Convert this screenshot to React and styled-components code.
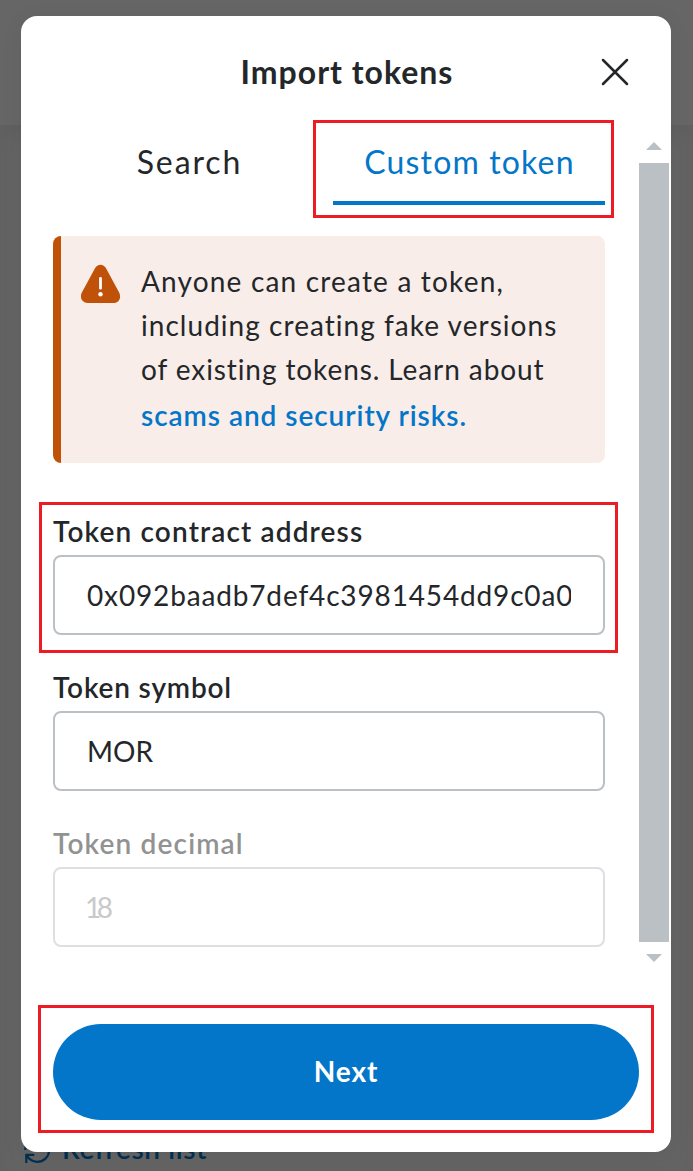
import React from "react";
import styled, { createGlobalStyle } from "styled-components";

const color = {
  text: "#24272a",
  primary: "#0376c9",
  warning: "#bf5208",
  warningMuted: "#f8ede8",
  border: "#bbc0c5",
  highlight: "#ed1c24",
};

const GlobalStyle = createGlobalStyle`
  * { box-sizing: border-box; }
  body {
    margin: 0;
    background: #626262;
    color: ${color.text};
    font-family: Lato, "Liberation Sans", sans-serif;
    font-variant-ligatures: none;
    overflow: hidden;
  }
`;

const Page = styled.div`
  position: relative;
  display: flex;
  flex-direction: column;
  height: 1171px;
  overflow: hidden;
`;

const PageHeader = styled.div`
  flex: none;
  height: 125px;
  background: #666;
`;

const PageBody = styled.div`
  flex: 1;
  display: flex;
  align-items: flex-end;
  padding: 0 24px 3px;
  background: #646464;
  box-shadow: inset 0 8px 18px rgba(0, 0, 0, 0.05);
`;

const RefreshLink = styled.div`
  display: flex;
  align-items: center;
  gap: 10px;
  color: #032f50;
  font-size: 28px;
  font-weight: 600;
  line-height: 40px;
  letter-spacing: 0.65px;

  svg { position: relative; top: 2px; }
`;

const Modal = styled.section`
  position: absolute;
  top: 16px;
  left: 21px;
  width: 650px;
  height: 1136px;
  display: flex;
  flex-direction: column;
  border-radius: 16px;
  background: #fff;
  box-shadow: 0 4px 24px rgba(0, 0, 0, 0.06);
`;

const ModalHeader = styled.header`
  flex: none;
  display: grid;
  grid-template-columns: 32px 1fr 32px;
  align-items: center;
  height: 109px;
  padding: 0 40px 0 42px;
`;

const Title = styled.h1`
  grid-column: 2;
  margin: 0;
  padding-top: 2px;
  text-align: center;
  font-size: 32px;
  font-weight: 700;
  line-height: 48px;
  letter-spacing: 1px;
`;

const CloseButton = styled.button`
  display: flex;
  padding: 2px 0 0;
  border: 0;
  background: none;
  color: inherit;
`;

const ScrollArea = styled.div`
  flex: none;
  display: flex;
  justify-content: space-between;
  height: 845px;
  padding: 0 2px 0 32px;
`;

const Content = styled.div`
  width: 552px;
`;

const Tabs = styled.nav`
  display: grid;
  grid-template-columns: 1fr 1fr;
  gap: 8px;
  margin-bottom: 31px;
`;

const Tab = styled.div`
  position: relative;
  height: 80px;
  padding-left: 1px;
  border-bottom: 4px solid ${(p) => (p.$active ? color.primary : "transparent")};
  color: ${(p) => (p.$active ? color.primary : color.text)};
  text-align: center;
  font-size: 32px;
  line-height: 74px;
  letter-spacing: ${(p) => p.$tracking}px;
`;

const Highlight = styled.span`
  position: absolute;
  inset: ${(p) => p.$inset};
  border: 3px solid ${color.highlight};
  pointer-events: none;
`;

const Alert = styled.div`
  display: flex;
  gap: 20px;
  height: 227px;
  padding: 23px 16px 24px 20px;
  border-left: 8px solid ${color.warning};
  border-radius: 8px;
  background: ${color.warningMuted};

  svg { flex: none; margin-top: 5px; }
`;

const AlertText = styled.div`
  font-size: 28px;
  line-height: 44px;
  white-space: nowrap;
`;

const AlertLine = styled.span`
  display: block;
  letter-spacing: ${(p) => p.$tracking}px;
`;

const AlertLink = styled.a`
  display: block;
  color: ${color.primary};
  font-weight: 600;
  line-height: 49px;
  letter-spacing: 0.95px;
`;

const Form = styled.div`
  display: flex;
  flex-direction: column;
  gap: 32px;
  padding-top: 48px;
`;

const Field = styled.label`
  position: relative;
  display: flex;
  flex-direction: column;
  gap: 4px;
`;

const FieldLabel = styled.span`
  color: ${(p) => (p.$disabled ? "#919393" : color.text)};
  font-size: 28px;
  font-weight: 600;
  line-height: 40px;
  letter-spacing: ${(p) => p.$tracking}px;
`;

const FieldInput = styled.input`
  width: 100%;
  height: 80px;
  padding: 0 32px;
  border: 2px solid ${color.border};
  border-radius: 8px;
  outline: 0;
  background: #fff;
  color: ${color.text};
  font: 400 28px/40px Lato, "Liberation Sans", sans-serif;
  letter-spacing: ${(p) => p.$tracking}px;

  &:disabled {
    padding-left: 30px;
    border-color: #dddfe2;
    color: #c8c9ca;
  }
`;

const Scrollbar = styled.div`
  display: flex;
  flex-direction: column;
  align-items: center;
  width: 30px;
  padding-top: 17px;
`;

const Arrow = styled.svg`
  flex: none;
  fill: ${color.border};
`;

const Thumb = styled.div`
  flex: none;
  align-self: stretch;
  height: 779px;
  margin: 13px 0 12px;
  background: ${color.border};
`;

const Footer = styled.footer`
  position: relative;
  padding: 54px 32px 32px;
`;

const NextButton = styled.button`
  display: block;
  width: 100%;
  height: 96px;
  padding: 0 0 3px;
  border: 0;
  border-radius: 48px;
  background: ${color.primary};
  color: #fff;
  font: 700 28px/40px Lato, "Liberation Sans", sans-serif;
  letter-spacing: 0.9px;
`;

function RefreshIcon() {
  return (
    <svg width="28" height="28" viewBox="0 0 28 28" fill="none" stroke="currentColor" strokeWidth="2.2">
      <path d="M1.200 14C1.200 7.500 6.500 2 13.500 2c5 0 9 2.600 11.200 7M25.200 2v8h-7.500" />
      <path d="M25.200 14.500c-.4 6.500-5.500 11.300-12 11.300-4.700 0-8.500-2.600-10.700-6.700M2.300 27v-8.200h8" />
    </svg>
  );
}

function CloseIcon() {
  return (
    <svg width="32" height="32" viewBox="0 0 32 32" fill="none" stroke="currentColor" strokeWidth="2.5" strokeLinecap="round">
      <path d="M4 4 28 28M28 4 4 28" />
    </svg>
  );
}

function WarningIcon() {
  return (
    <svg width="40" height="40" viewBox="0 0 40 40">
      <path
        d="M14 4.300C16.500-.4 22.500-.4 25 4.300L38 28.200C40.800 33.500 38 39 32.300 39H6.700C1 39-1.800 33.500 1 28.200Z"
        fill={color.warning}
      />
      <path d="M19.500 14.300V24.200" stroke="#fff" strokeWidth="2.800" strokeLinecap="round" />
      <circle cx="19.500" cy="30.300" r="2.200" fill="#fff" />
    </svg>
  );
}

function TokenField({ label, value, labelTracking, tracking, disabled, children }) {
  return (
    <Field>
      <FieldLabel $tracking={labelTracking} $disabled={disabled}>{label}</FieldLabel>
      <FieldInput value={value} $tracking={tracking} disabled={disabled} readOnly />
      {children}
    </Field>
  );
}

export default function App() {
  return (
    <Page>
      <GlobalStyle />
      <PageHeader />
      <PageBody>
        <RefreshLink>
          <RefreshIcon />
          Refresh list
        </RefreshLink>
      </PageBody>

      <Modal>
        <ModalHeader>
          <Title>Import tokens</Title>
          <CloseButton aria-label="Close"><CloseIcon /></CloseButton>
        </ModalHeader>

        <ScrollArea>
          <Content>
            <Tabs>
              <Tab $tracking={1.9}>Search</Tab>
              <Tab $active $tracking={1.15}>
                Custom token
                <Highlight $inset="-5px -9px -17px -20px" />
              </Tab>
            </Tabs>

            <Alert>
              <WarningIcon />
              <AlertText>
                <AlertLine $tracking={1.18}>Anyone can create a token,</AlertLine>
                <AlertLine $tracking={1.04}>including creating fake versions</AlertLine>
                <AlertLine $tracking={0.91}>of existing tokens. Learn about</AlertLine>
                <AlertLink>scams and security risks.</AlertLink>
              </AlertText>
            </Alert>

            <Form>
              <TokenField
                label="Token contract address"
                value="0x092baadb7def4c3981454dd9c0a0"
                labelTracking={1.14}
                tracking={0.85}
              >
                <Highlight $inset="-9px -13px -18px -14px" />
              </TokenField>
              <TokenField label="Token symbol" value="MOR" labelTracking={0.82} tracking={0.1} />
              <TokenField label="Token decimal" value="18" labelTracking={1.15} tracking={-4.5} disabled />
            </Form>
          </Content>

          <Scrollbar>
            <Arrow width="16" height="8" viewBox="0 0 16 8"><path d="M8 0 16 8H0Z" /></Arrow>
            <Thumb />
            <Arrow width="16" height="8" viewBox="0 0 16 8"><path d="M0 0H16L8 8Z" /></Arrow>
          </Scrollbar>
        </ScrollArea>

        <Footer>
          <NextButton>Next</NextButton>
          <Highlight $inset="35px 17px 19px 17px" />
        </Footer>
      </Modal>
    </Page>
  );
}
